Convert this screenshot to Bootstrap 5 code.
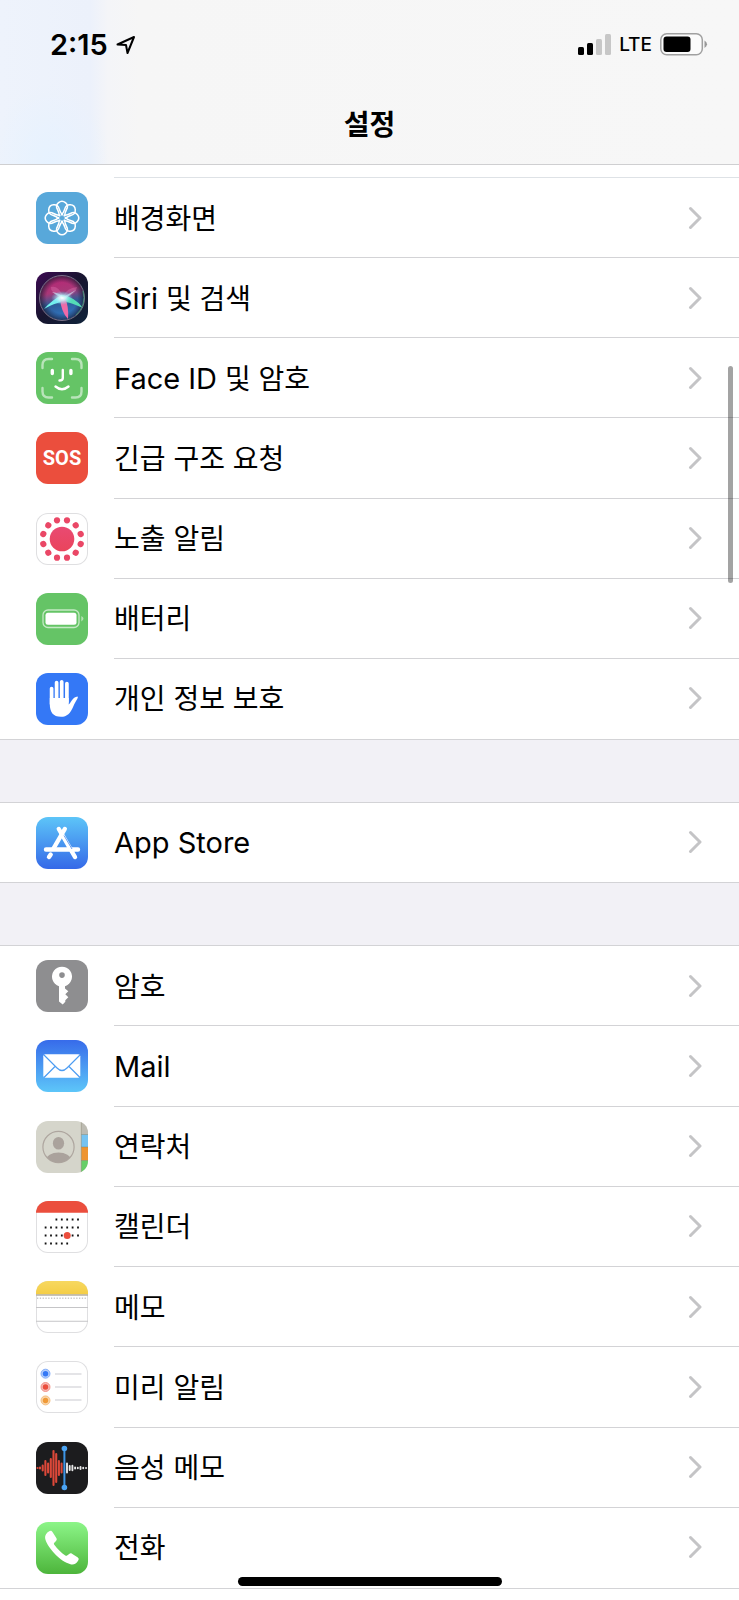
<!DOCTYPE html>
<html lang="ko">
<head>
<meta charset="utf-8">
<meta name="viewport" content="width=device-width, initial-scale=1">
<title>설정</title>
<link href="https://cdn.jsdelivr.net/npm/bootstrap@5.3.0/dist/css/bootstrap.min.css" rel="stylesheet">
<style>
  body { font-family: Inter, "Noto Sans CJK KR", sans-serif; font-size: 28px; line-height: 40px; color: #000; background: #f2f1f6; }
  .top-bar { background:
      radial-gradient(ellipse 60px 80px at 50px 100%, #e6f2ff, transparent),
      linear-gradient(90deg, #eef3fc 0, #ecf1fb 90px, #f4f5f8 108px, #f6f6f6 140px, #f7f7f7);
    border-bottom: 1px solid #cfcfd1; }
  .status-row { height: 89px; padding: 0 31px 0 50px; }
  .clock { font-size: 29px; font-weight: 600; }
  .carrier { font-size: 19px; font-weight: 500; }
  .page-title { font-size: 28px; line-height: 40px; font-weight: 600; height: 75px; padding-top: 16px; }
  .settings-group { --bs-list-group-border-radius: 0; background: #fff; border-bottom: 1px solid #d3d3d6; }
  .group-top { border-top: 1px solid #d3d3d6; }
  .rows-7 { min-height: 562px; }
  .rows-8 { min-height: 644px; }
  .setting { min-height: 79px; padding: 0 0 0 36px; gap: 26px; border: 0; color: #000; background: #fff; }
  .setting svg.app-icon, .sos-icon { width: 52px; height: 52px; border-radius: 12px; flex: none; }
  .framed { box-shadow: inset 0 0 0 1px #dfdfe1; }
  .setting-body { border-bottom: 1px solid #d3d3d6; padding-right: 37px; }
  .setting-body > span { padding-top: 2px; }
  .settings-group .setting:last-child .setting-body { border-bottom-color: transparent; }
  .list-tail { height: 13px; padding-left: 114px; background: #fff; }
  .latin { font-size: 29px; }
  .sos-icon { background: #eb4e3d; color: #fff; font: bold 20px/52px Roboto, "Liberation Sans", sans-serif; text-align: center; }
  .group-gap { height: 62px; }
  .scroll-thumb { position: absolute; top: 366px; right: 6px; width: 5px; height: 217px; border-radius: 3px; background: rgba(0,0,0,.36); z-index: 2; }
  .home-bar { position: absolute; top: 1577px; left: 50%; width: 264px; height: 9px; margin-left: -132px; border-radius: 5px; background: #000; z-index: 2; }
</style>
</head>
<body class="position-relative min-vh-100 d-flex flex-column">
<header class="top-bar">
  <div class="status-row d-flex align-items-center justify-content-between">
    <div class="d-flex align-items-center gap-2">
      <span class="clock">2:15</span>
      <svg width="20" height="20" viewBox="0 0 20 20" fill="none" stroke="#000" stroke-width="2" stroke-linejoin="round" aria-hidden="true"><path d="M1.500 9.500 18 2 11.500 18 10 10Z"/></svg>
    </div>
    <div class="d-flex align-items-center gap-2">
      <svg width="33" height="21" viewBox="0 0 33 21" aria-hidden="true"><rect y="13" width="6" height="8" rx="1.500"/><rect x="9" y="9" width="6" height="12" rx="1.500"/><g fill="#c7c7c7"><rect x="18" y="5" width="6" height="16" rx="1.500"/><rect x="27" width="6" height="21" rx="1.500"/></g></svg>
      <span class="carrier">LTE</span>
      <svg width="48" height="23" viewBox="0 0 48 23" aria-hidden="true"><rect x=".8" y=".8" width="41.500" height="21" rx="6" fill="#fbfbfb" stroke="#a0a0a0" stroke-width="1.500"/><rect x="3.500" y="3.500" width="27" height="15.500" rx="3"/><path d="M44.500 7.500q5 3.500 0 7.500z" fill="#999"/></svg>
    </div>
  </div>
  <h1 class="page-title text-center mb-0">설정</h1>
</header>

<main class="flex-grow-1 d-flex flex-column">
  <div class="list-tail"><div class="h-100 border-bottom"></div></div>
  <nav class="list-group settings-group rows-7" aria-label="기기">
    <a href="#" class="list-group-item setting flex-fill d-flex align-items-center">
      <svg class="app-icon" viewBox="0 0 52 52"><path fill="#58a8da" d="M0 0h52v52H0z"/><defs><path id="petal" d="M23.500 24.500Q23 20 21.500 17.500A5.300 5.300 0 1 1 30.500 17.500Q29 20 28.500 24.500"/></defs><g fill="none" stroke="#fff" stroke-width="1.500"><use href="#petal"/><use href="#petal" transform="rotate(45 26 26)"/><use href="#petal" transform="rotate(90 26 26)"/><use href="#petal" transform="rotate(135 26 26)"/><use href="#petal" transform="rotate(180 26 26)"/><use href="#petal" transform="rotate(225 26 26)"/><use href="#petal" transform="rotate(270 26 26)"/><use href="#petal" transform="rotate(315 26 26)"/></g></svg>
      <span class="setting-body align-self-stretch flex-fill d-flex align-items-center justify-content-between"><span>배경화면</span><svg width="14" height="24" viewBox="0 0 14 24"><path id="chevron" d="M2.500 2.500 12 12 2.500 21.500" fill="none" stroke="#c4c4c6" stroke-width="3" stroke-linecap="round" stroke-linejoin="round"/></svg></span>
    </a>
    <a href="#" class="list-group-item setting flex-fill d-flex align-items-center">
      <svg class="app-icon" viewBox="0 0 52 52"><defs><linearGradient id="siriBg" x2="1" y2="1"><stop stop-color="#3c0b52"/><stop offset=".5" stop-color="#17152f"/><stop offset="1" stop-color="#10243b"/></linearGradient><linearGradient id="siriOrb" x1=".4" x2=".6" y2="1"><stop stop-color="#b92575"/><stop offset=".35" stop-color="#a93878"/><stop offset=".6" stop-color="#2f5c96"/><stop offset="1" stop-color="#2f7ccc"/></linearGradient><radialGradient id="siriEdge"><stop offset=".7" stop-color="#211c3c" stop-opacity="0"/><stop offset="1" stop-color="#171a30" stop-opacity=".7"/></radialGradient><radialGradient id="siriGlow"><stop stop-color="#fff"/><stop offset=".4" stop-color="#c5f2fa" stop-opacity=".8"/><stop offset="1" stop-color="#65d4f5" stop-opacity="0"/></radialGradient></defs><path fill="url(#siriBg)" d="M0 0h52v52H0z"/><circle cx="26" cy="26" r="22" fill="url(#siriOrb)"/><circle cx="26" cy="26" r="22" fill="url(#siriEdge)"/><path d="M25 25Q14 20 15 15q7-2 12 9 4-8 14-9-1 8-13 11Z" fill="#ee83bf" opacity=".3"/><path d="M26 23Q16 28 8 37q10-6 19-7Z" fill="#72f1ed"/><path d="M26 23q13 2 21 13-11-5-20-7Z" fill="#54ddb6"/><path d="M24 26q1 14 8 21 1-13-3-21Z" fill="#ee6aa8"/><path d="M16 20q8 1 11 5L40 18 28 28Z" fill="#d8f4ff" opacity=".6"/><ellipse cx="26" cy="26" rx="11" ry="7" fill="url(#siriGlow)"/><circle cx="26" cy="26" r="22.500" fill="none" stroke="#7b7289"/><path d="M47 19a22.500 22.500 0 0 1-7 24" fill="none" stroke="#458d78"/></svg>
      <span class="setting-body align-self-stretch flex-fill d-flex align-items-center justify-content-between"><span><span class="latin">Siri</span> 및 검색</span><svg width="14" height="24"><use href="#chevron"/></svg></span>
    </a>
    <a href="#" class="list-group-item setting flex-fill d-flex align-items-center">
      <svg class="app-icon" viewBox="0 0 52 52"><path fill="#65c466" d="M0 0h52v52H0z"/><g fill="none" stroke="#fff" stroke-width="2.400" stroke-linecap="round"><path opacity=".55" d="M6.500 16v-3q0-6 6-6h3.500M36 7h3.500q6 0 6 6v3M45.500 36v3.500q0 6-6 6H36M16 45.500h-3.500q-6 0-6-6V36"/><path d="M26.800 18v8q0 2.500-3.300 2.500M19.500 34.500q6.500 5.500 13 0"/><path stroke-width="3.400" d="M16.300 18.500v3M34.900 18.500v3"/></g></svg>
      <span class="setting-body align-self-stretch flex-fill d-flex align-items-center justify-content-between"><span><span class="latin">Face ID</span> 및 암호</span><svg width="14" height="24"><use href="#chevron"/></svg></span>
    </a>
    <a href="#" class="list-group-item setting flex-fill d-flex align-items-center">
      <span class="sos-icon">SOS</span>
      <span class="setting-body align-self-stretch flex-fill d-flex align-items-center justify-content-between"><span>긴급 구조 요청</span><svg width="14" height="24"><use href="#chevron"/></svg></span>
    </a>
    <a href="#" class="list-group-item setting flex-fill d-flex align-items-center">
      <svg class="app-icon framed" viewBox="0 0 52 52"><defs><g id="dotPair"><circle cx="31" cy="7.300" r="3.100"/><circle cx="21" cy="7.300" r="3.100"/></g><linearGradient id="expo" gradientUnits="userSpaceOnUse" x1="26" y1="4" x2="26" y2="48"><stop stop-color="#e94c7b"/><stop offset="1" stop-color="#ea4253"/></linearGradient></defs><circle cx="26" cy="26" r="12.300" fill="url(#expo)"/><g fill="#ea4766"><use href="#dotPair"/><use href="#dotPair" transform="rotate(60 26 26)"/><use href="#dotPair" transform="rotate(120 26 26)"/><use href="#dotPair" transform="rotate(180 26 26)"/><use href="#dotPair" transform="rotate(240 26 26)"/><use href="#dotPair" transform="rotate(300 26 26)"/></g></svg>
      <span class="setting-body align-self-stretch flex-fill d-flex align-items-center justify-content-between"><span>노출 알림</span><svg width="14" height="24"><use href="#chevron"/></svg></span>
    </a>
    <a href="#" class="list-group-item setting flex-fill d-flex align-items-center">
      <svg class="app-icon" viewBox="0 0 52 52"><path fill="#65c466" d="M0 0h52v52H0z"/><rect x="7" y="17" width="36" height="17.500" rx="5" fill="none" stroke="#c5e9c5" stroke-width="1.300"/><rect x="9.500" y="19.700" width="31" height="12" rx="2.500" fill="#fff"/><path d="M45.300 23q4.400 2.700 0 5.500z" fill="#b5e2b5"/></svg>
      <span class="setting-body align-self-stretch flex-fill d-flex align-items-center justify-content-between"><span>배터리</span><svg width="14" height="24"><use href="#chevron"/></svg></span>
    </a>
    <a href="#" class="list-group-item setting flex-fill d-flex align-items-center">
      <svg class="app-icon" viewBox="0 0 52 52"><path fill="#3478f6" d="M0 0h52v52H0z"/><path d="M15.600 15.500V31M20.600 9.500V29M25.700 8.800V29M30.900 10.500V29" stroke="#fff" stroke-width="3.700" stroke-linecap="round"/><path d="M13.800 25H32.700V31.500C35 30 36 24 41.700 23.400 42.500 25 39.500 28 37.500 33 34.500 40.500 31 43.800 25 43.800 17 43.800 13.800 39 13.800 31Z" fill="#fff"/></svg>
      <span class="setting-body align-self-stretch flex-fill d-flex align-items-center justify-content-between"><span>개인 정보 보호</span><svg width="14" height="24"><use href="#chevron"/></svg></span>
    </a>
  </nav>

  <div class="group-gap"></div>

  <nav class="list-group settings-group group-top" aria-label="스토어">
    <a href="#" class="list-group-item setting flex-fill d-flex align-items-center">
      <svg class="app-icon" viewBox="0 0 52 52"><defs><linearGradient id="storeBg" x2="0" y2="1"><stop stop-color="#5dc5f8"/><stop offset="1" stop-color="#3569e8"/></linearGradient></defs><path fill="url(#storeBg)" d="M0 0h52v52H0z"/><path d="M10 32.500H42M14.700 37.500 13 40M22.800 12 39 40" stroke="#fff" stroke-width="4.400" stroke-linecap="round" fill="none"/><path d="M28.800 12 17.500 31.500" stroke="#fff" stroke-width="4.400" stroke-linecap="round"/><path d="m28 18.500 8 13.500" stroke="#4387ef" stroke-width=".8"/></svg>
      <span class="setting-body align-self-stretch flex-fill d-flex align-items-center justify-content-between"><span class="latin">App Store</span><svg width="14" height="24"><use href="#chevron"/></svg></span>
    </a>
  </nav>

  <div class="group-gap"></div>

  <nav class="list-group settings-group group-top rows-8" aria-label="앱">
    <a href="#" class="list-group-item setting flex-fill d-flex align-items-center">
      <svg class="app-icon" viewBox="0 0 52 52"><path fill="#8e8e90" d="M0 0h52v52H0z"/><path fill="#fff" fill-rule="evenodd" d="M23 26.200a10 10 0 1 1 6 0v2.300l3.300 2.800-3 3 3 3-3 3v1.400l-2.600 2.800-3.700-3ZM26 12.300a2.800 2.800 0 1 0 0 5.600 2.800 2.800 0 0 0 0-5.600Z"/></svg>
      <span class="setting-body align-self-stretch flex-fill d-flex align-items-center justify-content-between"><span>암호</span><svg width="14" height="24"><use href="#chevron"/></svg></span>
    </a>
    <a href="#" class="list-group-item setting flex-fill d-flex align-items-center">
      <svg class="app-icon" viewBox="0 0 52 52"><defs><linearGradient id="mailBg" x2="0" y2="1"><stop stop-color="#376bea"/><stop offset="1" stop-color="#5dc6f9"/></linearGradient></defs><path fill="url(#mailBg)" d="M0 0h52v52H0z"/><rect x="7.300" y="14.300" width="37" height="23.500" rx="2" fill="#fff"/><path d="m8 15 13 13q5 5 10 0L44 15M8 37.500l11-11m14 0 11 11" fill="none" stroke="#4c9cf2" stroke-width="1.200"/></svg>
      <span class="setting-body align-self-stretch flex-fill d-flex align-items-center justify-content-between"><span class="latin">Mail</span><svg width="14" height="24"><use href="#chevron"/></svg></span>
    </a>
    <a href="#" class="list-group-item setting flex-fill d-flex align-items-center">
      <svg class="app-icon" viewBox="0 0 52 52"><defs><clipPath id="person"><circle cx="22.500" cy="26" r="15.500"/></clipPath></defs><path fill="#d5d5cb" d="M0 0h52v52H0z"/><path fill="#bdbbb2" d="M45.300 0H52v13.500h-6.700z"/><path fill="#75c3f2" d="M45.300 13.500H52V26h-6.700z"/><path fill="#ee9430" d="M45.300 26H52v13.500h-6.700z"/><path fill="#66ce68" d="M45.300 39.500H52V52h-6.700z"/><path d="M45.300 0v52M45.300 13.500H52M45.300 26H52M45.300 39.500H52" stroke="#807b63" stroke-opacity=".55" stroke-width=".8"/><circle cx="22.500" cy="26" r="15.600" fill="none" stroke="#aea69f" stroke-width="1.200"/><g clip-path="url(#person)" fill="#aaa29c"><ellipse cx="22.500" cy="22.300" rx="5.600" ry="6.300"/><ellipse cx="22.500" cy="39" rx="12.500" ry="7.500"/></g></svg>
      <span class="setting-body align-self-stretch flex-fill d-flex align-items-center justify-content-between"><span>연락처</span><svg width="14" height="24"><use href="#chevron"/></svg></span>
    </a>
    <a href="#" class="list-group-item setting flex-fill d-flex align-items-center">
      <svg class="app-icon framed" viewBox="0 0 52 52"><path fill="#eb4e3d" d="M0 0h52v11.700H0z"/><path d="M19.500 18.500H43M8.700 26.500H43M8.700 34.500H43M8.700 42.500H33" stroke="#111" stroke-width="1.800" stroke-dasharray="1.800 3.600"/><circle cx="31.200" cy="34.600" r="3.500" fill="#eb4e3d"/></svg>
      <span class="setting-body align-self-stretch flex-fill d-flex align-items-center justify-content-between"><span>캘린더</span><svg width="14" height="24"><use href="#chevron"/></svg></span>
    </a>
    <a href="#" class="list-group-item setting flex-fill d-flex align-items-center">
      <svg class="app-icon framed" viewBox="0 0 52 52"><defs><linearGradient id="noteTop" x2="0" y2="1"><stop stop-color="#f7d860"/><stop offset="1" stop-color="#f4cd45"/></linearGradient></defs><path fill="url(#noteTop)" d="M0 0h52v13.500H0z"/><path stroke="#b5afa0" stroke-width="1.400" d="M0 14h52"/><path stroke="#c9c9c9" stroke-width="1.600" stroke-dasharray="1.300 1.500" d="M1 17.300h50"/><path stroke="#c5c5c7" stroke-width="1.100" d="M0 26.500h52M0 40.300h52"/></svg>
      <span class="setting-body align-self-stretch flex-fill d-flex align-items-center justify-content-between"><span>메모</span><svg width="14" height="24"><use href="#chevron"/></svg></span>
    </a>
    <a href="#" class="list-group-item setting flex-fill d-flex align-items-center">
      <svg class="app-icon framed" viewBox="0 0 52 52"><path stroke="#dcdcdf" stroke-width="1.300" d="M19 13h26.500M19 26h26.500M19 39h26.500"/><g stroke-width="1.700"><circle cx="9.500" cy="12.700" r="3.600" fill="#3478f6" stroke="#b4cefb"/><circle cx="9.500" cy="26" r="3.600" fill="#eb4e3d" stroke="#f6bbb5"/><circle cx="9.500" cy="39.400" r="3.600" fill="#f09a37" stroke="#f8d6ac"/></g><g fill="none" stroke-width=".8"><circle cx="9.500" cy="12.700" r="4.500" stroke="#6e9ff8"/><circle cx="9.500" cy="26" r="4.500" stroke="#f08075"/><circle cx="9.500" cy="39.400" r="4.500" stroke="#f4b469"/></g></svg>
      <span class="setting-body align-self-stretch flex-fill d-flex align-items-center justify-content-between"><span>미리 알림</span><svg width="14" height="24"><use href="#chevron"/></svg></span>
    </a>
    <a href="#" class="list-group-item setting flex-fill d-flex align-items-center">
      <svg class="app-icon" viewBox="0 0 52 52"><path fill="#1c1c1e" d="M0 0h52v52H0z"/><path stroke="#dc4839" stroke-width="2.100" stroke-linecap="round" d="M1.500 26h.1M4 25.500v1M6.700 23.500v5M9.400 19v14M12.100 21.500v9M14.800 17v18M17.500 9v34M20.200 12v28M22.900 19v14M25.600 21.500v9"/><path stroke="#e8e8e8" stroke-width="1.900" stroke-linecap="round" d="M31 21.500v9M33.700 24v4M36.400 23.700v4.600M39.100 25.500v1M41.800 25.800v.4M44.500 25v2M47.200 25.700v.6M50 26h.1"/><path stroke="#3d95e4" stroke-width="2" d="M28.400 6.500v39"/><circle cx="28.400" cy="6.500" r="2.800" fill="#4ba4f3"/><circle cx="28.400" cy="45.500" r="2.800" fill="#4ba4f3"/></svg>
      <span class="setting-body align-self-stretch flex-fill d-flex align-items-center justify-content-between"><span>음성 메모</span><svg width="14" height="24"><use href="#chevron"/></svg></span>
    </a>
    <a href="#" class="list-group-item setting flex-fill d-flex align-items-center">
      <svg class="app-icon" viewBox="0 0 52 52"><defs><linearGradient id="callBg" x2="0" y2="1"><stop stop-color="#8cf588"/><stop offset="1" stop-color="#4db53b"/></linearGradient></defs><path fill="url(#callBg)" d="M0 0h52v52H0z"/><path fill="#fff" d="M13.200 9.300C14.700 8.300 15.800 8.800 16.800 10.400L20.300 16C21 17.200 20.800 18.200 20 19L18.300 20.700C17.700 21.400 17.800 22 18.300 22.800 21.300 27 25 30.700 29.300 33.400 30.100 33.900 30.700 33.900 31.400 33.200L33.200 31.900C34 31.200 35 31.200 36 31.800L41.500 35.200C42.800 36 43.100 37 42.200 38.400 40.500 41.500 37.800 43 34.500 42.200 29.500 41 23.500 37 18.500 31.500 13 25.500 9.600 20 9.100 16 8.800 13.300 10.500 10.800 13.200 9.300Z"/></svg>
      <span class="setting-body align-self-stretch flex-fill d-flex align-items-center justify-content-between"><span>전화</span><svg width="14" height="24"><use href="#chevron"/></svg></span>
    </a>
  </nav>
  <div class="flex-grow-1 bg-white"></div>
</main>
<div class="scroll-thumb"></div>
<div class="home-bar"></div>
<script src="https://cdn.jsdelivr.net/npm/bootstrap@5.3.0/dist/js/bootstrap.bundle.min.js"></script>
</body>
</html>
